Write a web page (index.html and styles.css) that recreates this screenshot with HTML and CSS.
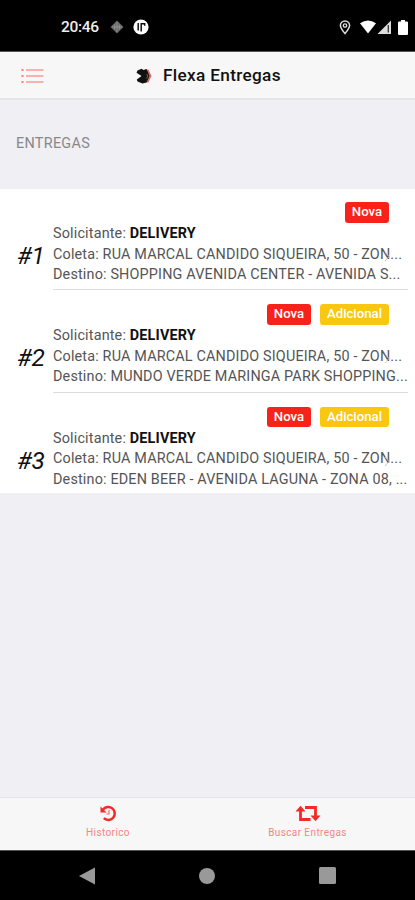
FILE: index.html
```html
<!DOCTYPE html>
<html lang="pt-BR">
<head>
<meta charset="utf-8">
<title>Flexa Entregas</title>
<link rel="stylesheet" href="styles.css">
</head>
<body>
<div class="status">
  <span class="clock">20:46</span>
  <svg class="diamond" width="14" height="14" viewBox="0 0 14 14"><path d="M7 .5 13.5 7 7 13.5.5 7z" fill="#666"/><path d="M7 2v10M2 7h10M4.700 4.500v5M9.300 4.500v5" stroke="#999" stroke-width=".8"/></svg>
  <svg class="round" width="16" height="16" viewBox="0 0 16 16"><circle cx="8" cy="8" r="7.600" fill="#fff"/><path d="M5.200 4v7.500M8.200 12.500V4.800h3.500v2" fill="none" stroke="#111" stroke-width="1.500"/></svg>
  <svg class="pin" width="12" height="15" viewBox="0 0 12 15"><path d="M6 13.600C3.400 10.500 1.400 8 1.400 5.500a4.600 4.600 0 0 1 9.200 0C10.600 8 8.600 10.500 6 13.600z" fill="none" stroke="#ddd" stroke-width="1.500"/><circle cx="6" cy="5.500" r="1.700" fill="none" stroke="#ddd" stroke-width="1.300"/></svg>
  <svg class="wifi" width="16" height="14" viewBox="0 0 16 14"><path d="M0 3.200Q8-2.400 16 3.200L8 13.500z" fill="#fff"/></svg>
  <svg class="signal" width="15" height="15" viewBox="0 0 15 15"><path d="M14 .5V14H.5z" fill="#ddd"/><path d="M11.300 5v7.500" stroke="#333" stroke-width="1.300"/></svg>
  <svg class="battery" width="10" height="15" viewBox="0 0 10 15"><path d="M3 0h4v1.500h2q1 0 1 1V14q0 1-1 1H1q-1 0-1-1V2.500q0-1 1-1h2z" fill="#fff"/></svg>
</div>
<header class="header">
  <svg class="menu" width="23" height="16" viewBox="0 0 23 16"><path d="M5 2h17.500M5 8h17.500M5 14h17.500" stroke="#f79a98" stroke-width="1.500"/><path d="M.5 2h2M.5 8h2M.5 14h2" stroke="#f77c79" stroke-width="2"/></svg>
  <svg class="logo" width="16" height="16" viewBox="0 0 16 16"><path d="M10 1.500h2.500l3 6.500-3 6.500H10l3-6.500z" fill="#d9706c"/><path d="M1.500 2.500 5.500.8l2 1.200L10.500 1l3 7-3 6.500-4 .9-5-1.900L.8 11.500 5.500 8 .5 4.800z" fill="#111"/><path d="m10.500 6 1.500 2-1.500 2.500" fill="none" stroke="#a98632" stroke-width=".8"/></svg>
  <h1 class="title">Flexa Entregas</h1>
</header>
<main class="content">
  <h2 class="section">ENTREGAS</h2>
  <ul class="list">
    <li class="row">
      <span class="number">#1</span>
      <div class="body">
        <div class="badges"><span class="badge nova">Nova</span></div>
        <p class="line requester">Solicitante: <b>DELIVERY</b></p>
        <p class="line pickup">Coleta: RUA MARCAL CANDIDO SIQUEIRA, 50 - ZON...</p>
        <p class="line">Destino: SHOPPING AVENIDA CENTER - AVENIDA S...</p>
        <svg class="chevron" width="6" height="11" viewBox="0 0 6 11"><path d="m1 1 4 4.500L1 10" fill="none" stroke="#c5c5c9"/></svg>
      </div>
    </li>
    <li class="row">
      <span class="number">#2</span>
      <div class="body">
        <div class="badges"><span class="badge nova">Nova</span><span class="badge extra">Adicional</span></div>
        <p class="line requester">Solicitante: <b>DELIVERY</b></p>
        <p class="line pickup">Coleta: RUA MARCAL CANDIDO SIQUEIRA, 50 - ZON...</p>
        <p class="line">Destino: MUNDO VERDE MARINGA PARK SHOPPING...</p>
        <svg class="chevron" width="6" height="11" viewBox="0 0 6 11"><path d="m1 1 4 4.500L1 10" fill="none" stroke="#c5c5c9"/></svg>
      </div>
    </li>
    <li class="row">
      <span class="number">#3</span>
      <div class="body">
        <div class="badges"><span class="badge nova">Nova</span><span class="badge extra">Adicional</span></div>
        <p class="line requester">Solicitante: <b>DELIVERY</b></p>
        <p class="line pickup">Coleta: RUA MARCAL CANDIDO SIQUEIRA, 50 - ZON...</p>
        <p class="line">Destino: EDEN BEER - AVENIDA LAGUNA - ZONA 08, ...</p>
        <svg class="chevron" width="6" height="11" viewBox="0 0 6 11"><path d="m1 1 4 4.500L1 10" fill="none" stroke="#c5c5c9"/></svg>
      </div>
    </li>
  </ul>
</main>
<nav class="tabs">
  <div class="tab history">
    <svg width="17" height="17" viewBox="0 0 17 17"><path d="M3 4.600A6.500 6.500 0 1 1 3.800 13.200" fill="none" stroke="#f32a25" stroke-width="2.500"/><path d="M.5 1.500v6h6z" fill="#f32a25"/><path d="M9 5v4H6.500" fill="none" stroke="#f66" stroke-width="1.200"/></svg>
    <span>Historico</span>
  </div>
  <div class="tab search">
    <svg width="26" height="17" viewBox="0 0 26 17"><path d="M5.500 5v9.500h10M10 2.500h10.500V12" fill="none" stroke="#f32a25" stroke-width="2.800"/><path d="M.5 6.500 5.500.8l5 5.700zM15.500 10.500h10l-5 5.700z" fill="#f32a25"/></svg>
    <span>Buscar Entregas</span>
  </div>
</nav>
<footer class="system">
  <svg width="16" height="18" viewBox="0 0 16 18"><path d="M0 9 16 .5v17z" fill="#999"/></svg>
  <svg width="16" height="16" viewBox="0 0 16 16"><circle cx="8" cy="8" r="8" fill="#999"/></svg>
  <svg width="17" height="17" viewBox="0 0 17 17"><rect width="17" height="17" rx="1.500" fill="#999"/></svg>
</footer>
</body>
</html>
```
FILE: styles.css
```css
* { box-sizing: border-box; }
body {
  margin: 0;
  width: 415px;
  height: 900px;
  display: flex;
  flex-direction: column;
  overflow: hidden;
  background: #efeff4;
  font-family: Roboto, "Liberation Sans", sans-serif;
}
h1, h2, p, ul { margin: 0; padding: 0; }
svg { display: block; flex: none; }
.status {
  height: 52px;
  flex: none;
  display: flex;
  align-items: center;
  padding: 3px 7px 0 61px;
  background: #000;
  border-bottom: 1px solid #555;
}
.clock { width: 38px; color: #eee; font-size: 15.500px; font-weight: 500; letter-spacing: -.3px; }
.diamond { margin-left: 11px; }
.round { margin-left: 9px; }
.pin { margin-left: auto; }
.wifi { margin-left: 9px; }
.signal { margin-left: 1px; }
.battery { margin-left: 6px; }
.header {
  height: 48px;
  flex: none;
  display: flex;
  align-items: center;
  padding-left: 21px;
  background: #f7f7f7;
  border-bottom: 2px solid #e6e6ea;
}
.menu, .logo { margin-top: 2px; }
.logo { margin-left: 92px; }
.title { margin-left: 11px; font-size: 17.200px; font-weight: 500; letter-spacing: .33px; color: #111; white-space: nowrap; }
.content { flex: 1; }
.section {
  height: 89px;
  padding: 34px 0 0 16px;
  font-size: 14.400px;
  line-height: 20px;
  font-weight: 400;
  letter-spacing: .3px;
  color: #88888c;
}
.list { list-style: none; background: #fff; height: 303.500px; }
.row { height: 102.300px; display: flex; }
.number {
  width: 53px;
  padding: 53px 0 0 17px;
  font-size: 24.500px;
  line-height: 28px;
  font-style: italic;
  letter-spacing: -.2px;
  color: #111;
}
.body {
  position: relative;
  width: 355px;
  height: 101.300px;
  padding-top: 13px;
  border-bottom: 1px solid #dcdcde;
}
.row:last-child .body { border-bottom: 0; }
.badges { height: 22px; display: flex; justify-content: flex-end; gap: 9px; padding-right: 19px; }
.badge {
  height: 20.500px;
  border-radius: 3px;
  text-align: center;
  color: #fff;
  font-size: 13.200px;
  line-height: 20.500px;
  font-weight: 500;
}
.nova { width: 44px; background: #f7231b; }
.extra { width: 69px; background: #fac710; }
.line { font-size: 14.400px; line-height: 20.500px; letter-spacing: .165px; color: #555; white-space: nowrap; }
.line b { font-weight: 700; color: #111; }
.chevron { position: absolute; right: 18px; top: 62px; }
.tabs {
  height: 53px;
  flex: none;
  display: flex;
  background: #f7f7f7;
  border-top: 1px solid #e5e5e9;
}
.tab {
  display: flex;
  flex-direction: column;
  align-items: center;
  padding-top: 7px;
  font-size: 10px;
  line-height: 14px;
  letter-spacing: .4px;
  color: #f78582;
}
.tab span { margin-top: 4px; }
.history { width: 216px; }
.search { width: 183px; }
.system {
  height: 50px;
  flex: none;
  display: flex;
  align-items: center;
  gap: 104px;
  padding-left: 79px;
  background: #000;
  border-top: 1px solid #555;
}
```
